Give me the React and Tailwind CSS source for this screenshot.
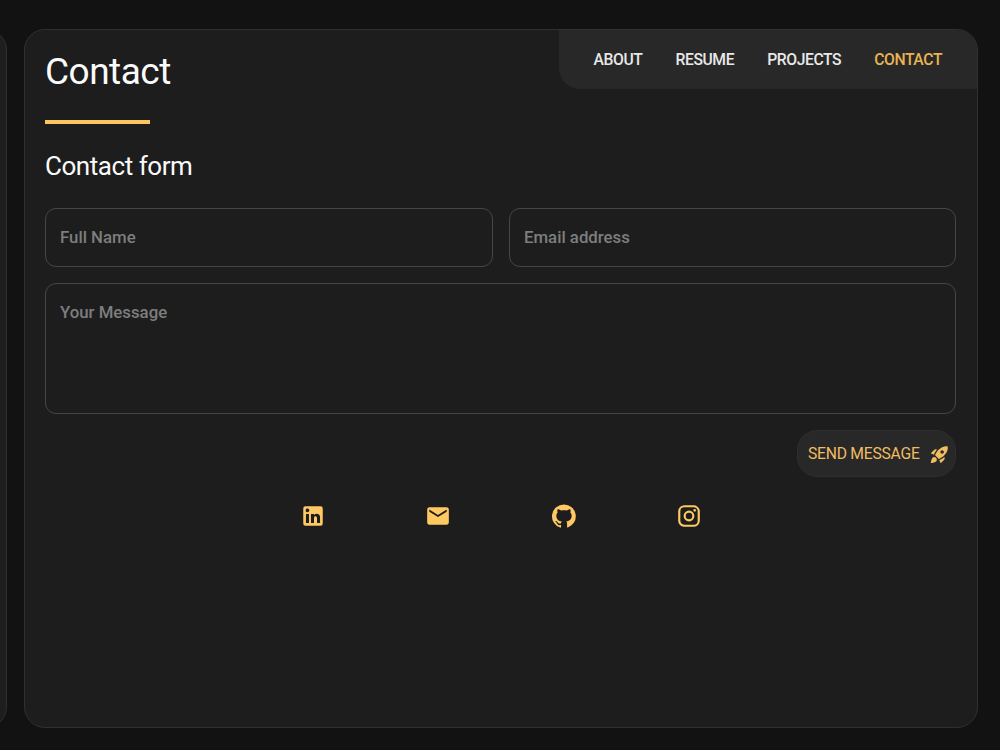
import React from "react";
import { MdEmail, MdRocketLaunch } from "react-icons/md";

const navItems = ["About", "Resume", "Projects", "Contact"];

// Social icons, all on a 24x24 grid
const LinkedInIcon = () => (
  <svg viewBox="0 0 24 24" fill="currentColor" className="size-[26px]">
    <path d="M19 3a2 2 0 0 1 2 2v14a2 2 0 0 1-2 2H5a2 2 0 0 1-2-2V5a2 2 0 0 1 2-2h14m-.5 15.5v-5.3a3.26 3.26 0 0 0-3.26-3.26c-.85 0-1.84.52-2.32 1.3v-1.11h-2.79v8.37h2.79v-4.93c0-.77.62-1.4 1.39-1.4a1.4 1.4 0 0 1 1.4 1.4v4.93h2.79M6.88 8.56a1.68 1.68 0 0 0 1.68-1.68c0-.93-.75-1.69-1.68-1.69a1.69 1.69 0 0 0-1.69 1.69c0 .93.76 1.68 1.69 1.68m1.39 9.94v-8.37H5.5v8.37h2.77z" />
  </svg>
);

const GitHubIcon = () => (
  <svg viewBox="0 0 24 24" fill="currentColor" className="size-[26px]">
    <path d="M12 1.27a11 11 0 00-3.48 21.46c.55.09.73-.28.73-.55v-1.84c-3.03.64-3.67-1.46-3.67-1.46-.55-1.29-1.28-1.65-1.28-1.65-.92-.65.1-.65.1-.65 1.1 0 1.73 1.1 1.73 1.1.92 1.65 2.57 1.2 3.21.92a2 2 0 01.64-1.47c-2.47-.27-5.04-1.19-5.04-5.5 0-1.1.46-2.1 1.2-2.84a3.76 3.76 0 010-2.93s.91-.28 3.11 1.1c1.8-.49 3.7-.49 5.5 0 2.1-1.38 3.02-1.1 3.02-1.1a3.76 3.76 0 01.1 2.83c.74.74 1.2 1.74 1.2 2.94 0 4.21-2.57 5.13-5.04 5.4.45.37.82.92.82 2.02v3.03c0 .27.1.64.73.55A11 11 0 0012 1.27" />
  </svg>
);

const InstagramIcon = () => (
  <svg viewBox="0 0 24 24" fill="currentColor" className="size-[26px]">
    <path d="M7.8 2h8.4C19.4 2 22 4.6 22 7.8v8.4a5.8 5.8 0 0 1-5.8 5.8H7.8C4.6 22 2 19.4 2 16.2V7.8A5.8 5.8 0 0 1 7.8 2m-.2 2A3.6 3.6 0 0 0 4 7.6v8.8C4 18.39 5.61 20 7.6 20h8.8a3.6 3.6 0 0 0 3.6-3.6V7.6C20 5.61 18.39 4 16.4 4H7.6m9.65 1.5a1.25 1.25 0 0 1 1.25 1.25A1.25 1.25 0 0 1 17.25 8 1.25 1.25 0 0 1 16 6.75a1.25 1.25 0 0 1 1.25-1.25M12 7a5 5 0 0 1 5 5 5 5 0 0 1-5 5 5 5 0 0 1-5-5 5 5 0 0 1 5-5m0 2a3 3 0 0 0-3 3 3 3 0 0 0 3 3 3 3 0 0 0 3-3 3 3 0 0 0-3-3z" />
  </svg>
);

const Navbar = () => (
  <nav className="h-[59px] w-[418px] shrink-0 rounded-bl-[21px] rounded-tr-[20px] bg-[#282828] pl-[34.5px]">
    <ul className="flex h-[59px] items-center gap-[33px] text-[15.7px] font-medium uppercase tracking-[-0.4px] text-[#e8e8e8]">
      {navItems.map((item) => (
        <li key={item} className={item === "Contact" ? "text-[#e8b354]" : ""}>
          <a href="#">{item}</a>
        </li>
      ))}
    </ul>
  </nav>
);

const ContactForm = () => (
  <form className="flex flex-col items-end gap-4 text-[16.8px] font-medium">
    <div className="flex w-full gap-4">
      <input
        type="text"
        placeholder="Full Name"
        className="h-[59px] w-[448px] rounded-[11px] border border-[#464646] px-[14px] pb-px placeholder:text-[#7e7e7e] focus:outline-none"
      />
      <input
        type="email"
        placeholder="Email address"
        className="h-[59px] min-w-0 flex-1 rounded-[11px] border border-[#464646] px-[14px] pb-px placeholder:text-[#7e7e7e] focus:outline-none"
      />
    </div>
    <textarea
      placeholder="Your Message"
      className="block h-[131px] w-full resize-none rounded-[11px] border border-[#464646] px-[14px] py-[16px] placeholder:text-[#7e7e7e] focus:outline-none"
    />
    <button
      type="button"
      className="flex h-[47px] w-[159px] items-center justify-between rounded-[20px] border border-[#2e2e2e] bg-[#282828] pl-[10px] pr-[5px] pt-px text-[15.7px] font-normal tracking-[-0.25px] text-[#f0bd62]"
    >
      SEND MESSAGE
      <MdRocketLaunch className="size-[21px]" />
    </button>
  </form>
);

const App = () => {
  return (
    <div className="flex h-[750px] w-[1000px] gap-[17px] overflow-hidden bg-[#121212] font-[Roboto,sans-serif] text-[#fafafa]">
      {/* Edge of the sidebar */}
      <aside className="mt-[29px] h-[699px] w-[7px] shrink-0 overflow-hidden">
        <div className="-ml-[60px] h-full w-[67px] rounded-[21px] border border-[#303030] bg-[#1e1e1e]" />
      </aside>

      <main className="mt-[29px] h-[699px] w-[954px] shrink-0 rounded-[21px] border border-[#303030] bg-[#1d1d1d]">
        <header className="flex justify-between pl-[20px]">
          <div className="pt-[20px]">
            <h1 className="text-[37px] leading-[44px] tracking-[-0.5px]">Contact</h1>
            <div className="mt-[26px] h-[4px] w-[105px] bg-[#fdc55e]" />
          </div>
          <Navbar />
        </header>

        <section className="pl-[20px] pr-[21px]">
          <h2 className="mb-[26px] mt-[26px] text-[26px] leading-[32px] tracking-[-0.45px]">Contact form</h2>
          <ContactForm />

          {/* Social links */}
          <div className="mt-[25.5px] flex justify-center gap-[99.5px] pl-px text-[#fec863]">
            <LinkedInIcon />
            <MdEmail className="size-[26px]" />
            <GitHubIcon />
            <InstagramIcon />
          </div>
        </section>
      </main>
    </div>
  );
};

export default App;
